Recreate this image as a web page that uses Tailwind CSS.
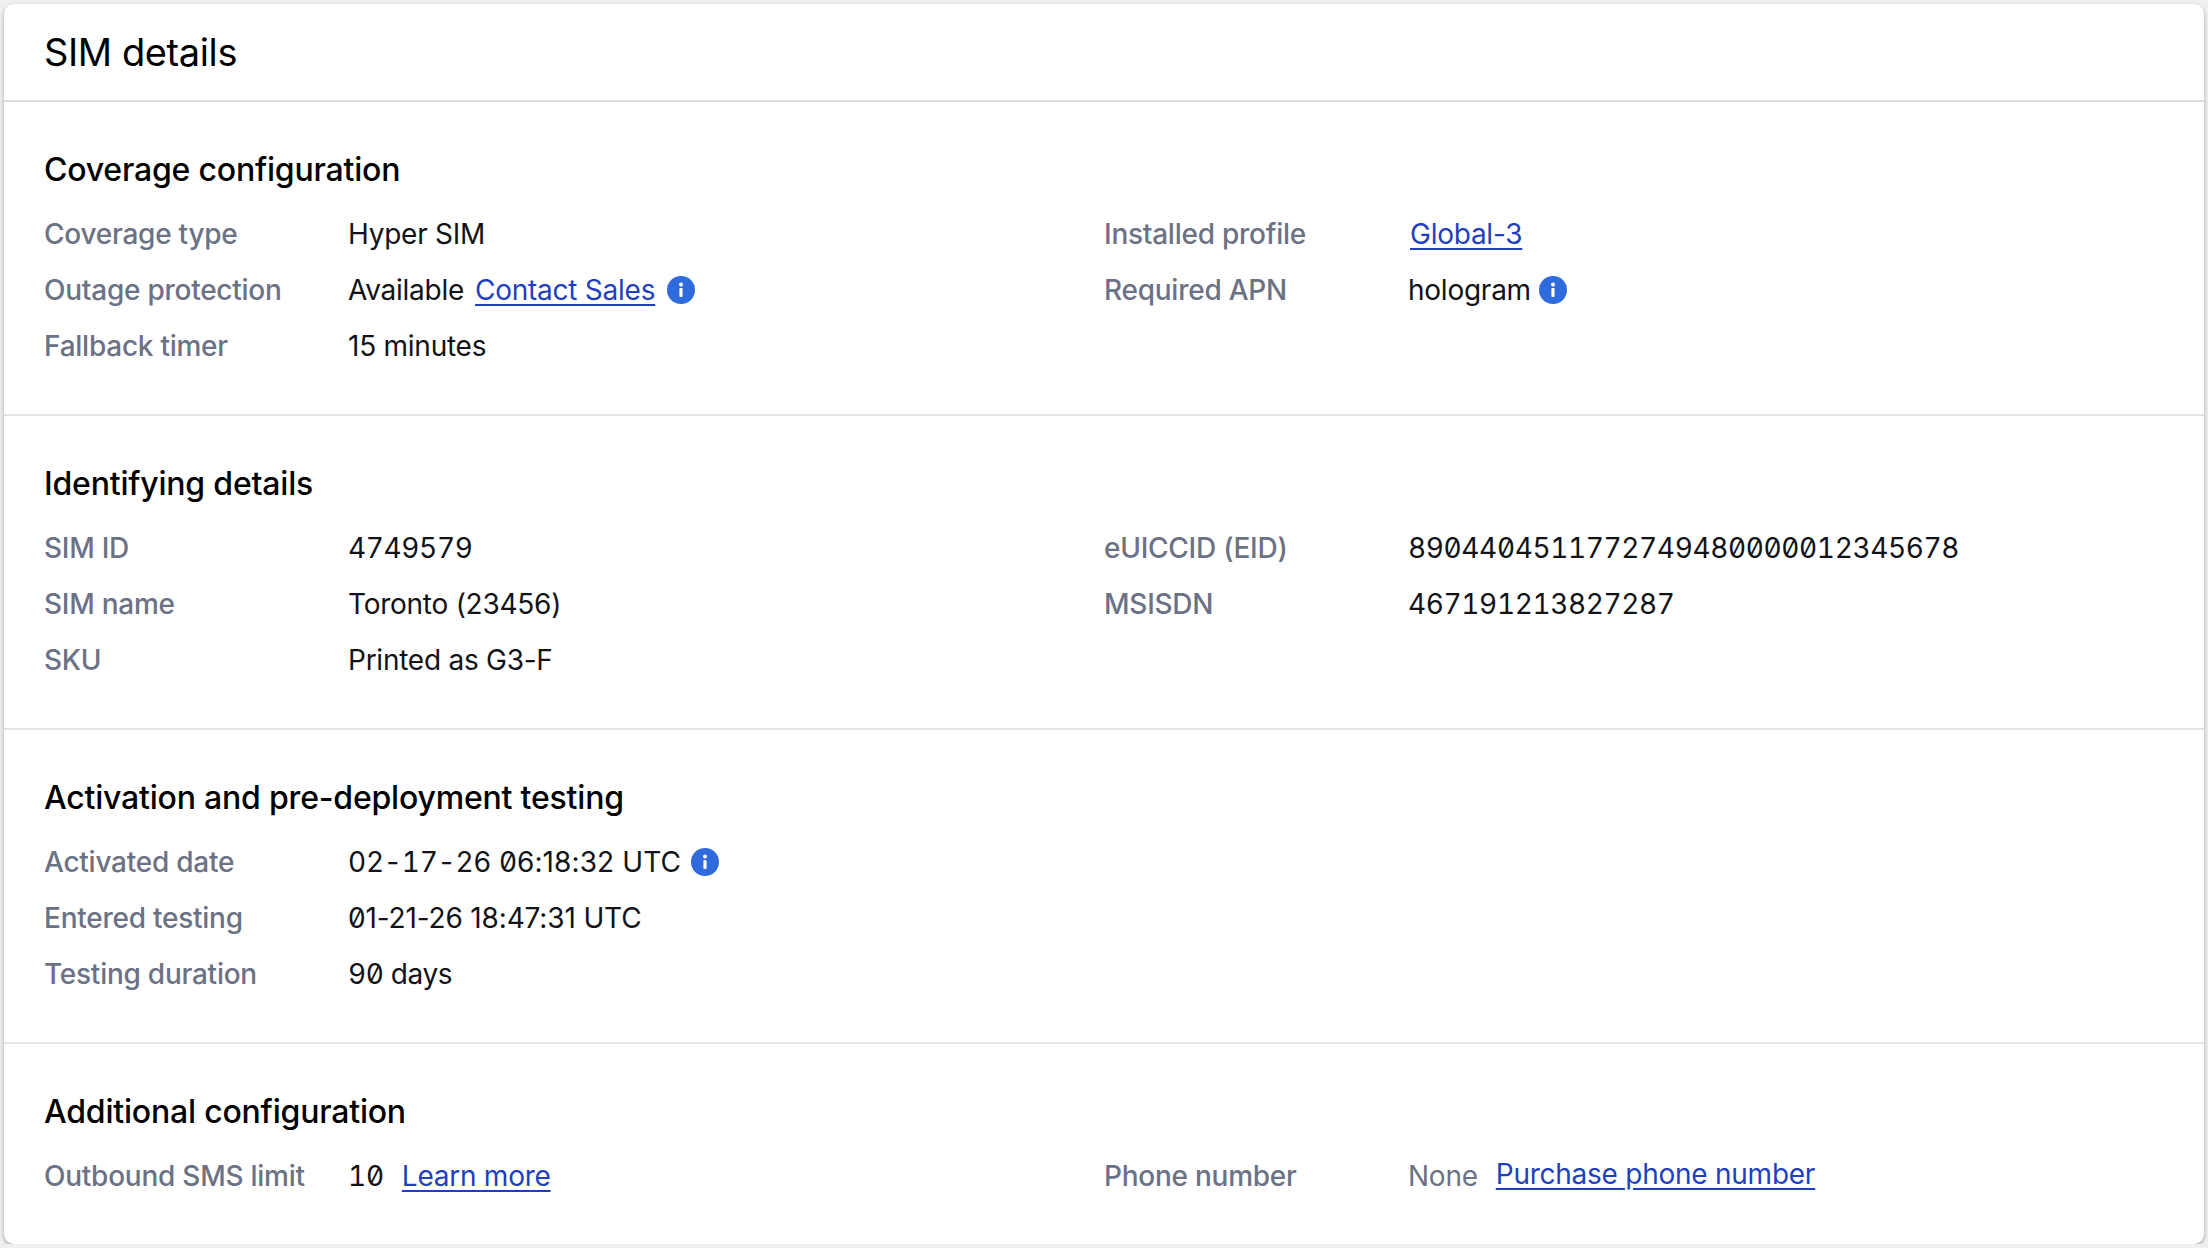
<!DOCTYPE html>
<html>
<head>
    <title>SIM details</title>
    <meta name="viewport" content="width=device-width, initial-scale=1.0">
    <script src="https://cdn.jsdelivr.net/npm/@tailwindcss/browser@4"></script>
</head>
<body class="bg-[#eeeff1] font-['Inter',sans-serif] text-[28px] leading-[40px] tracking-[-0.25px] text-[#111318]">
    <div class="w-[2200px] h-[1240px] mx-auto mt-[4px] bg-white rounded-[10px] shadow-[0_2px_4px_rgba(0,0,0,0.3)] overflow-hidden">
        <div class="h-[98px] border-b-2 border-[#d9dbe1] pl-[40px] flex items-center">
            <h1 class="text-[38px] leading-[44px] font-normal tracking-[-0.4px] text-black">SIM details</h1>
        </div>

        <section class="px-[40px] pt-[48px] pb-[48px] border-b-2 border-[#e3e4e9]">
            <h2 class="text-[32px] leading-[40px] font-medium mb-[24px] tracking-[-0.2px] text-black">Coverage configuration</h2>
            <div class="grid grid-cols-2">
                <div class="space-y-[16px]">
                    <div class="grid grid-cols-[304px_1fr]"><span class="text-[#6b7285] font-medium">Coverage type</span><span>Hyper SIM</span></div>
                    <div class="grid grid-cols-[304px_1fr]"><span class="text-[#6b7285] font-medium">Outage protection</span>
                        <span class="flex items-center gap-[10px]">Available <a href="#" class="text-[#1f3fbf] underline underline-offset-[4px] ml-[1px] mr-[2px]">Contact Sales</a>
                            <svg class="w-[28px] h-[28px]" viewBox="0 0 28 28"><circle cx="14" cy="14" r="14" fill="#2f6bdd"/><circle cx="14" cy="8.5" r="2" fill="#fff"/><rect x="12.4" y="12" width="3.2" height="9" rx="1" fill="#fff"/></svg>
                        </span>
                    </div>
                    <div class="grid grid-cols-[304px_1fr]"><span class="text-[#6b7285] font-medium">Fallback timer</span><span>15 minutes</span></div>
                </div>
                <div class="space-y-[16px]">
                    <div class="grid grid-cols-[304px_1fr]"><span class="text-[#6b7285] font-medium">Installed profile</span><span class="pl-[2px]"><a href="#" class="text-[#1f3fbf] underline underline-offset-[4px]">Global-3</a></span></div>
                    <div class="grid grid-cols-[304px_1fr]"><span class="text-[#6b7285] font-medium">Required APN</span>
                        <span class="flex items-center gap-[8px]">hologram
                            <svg class="w-[28px] h-[28px]" viewBox="0 0 28 28"><circle cx="14" cy="14" r="14" fill="#2f6bdd"/><circle cx="14" cy="8.5" r="2" fill="#fff"/><rect x="12.4" y="12" width="3.2" height="9" rx="1" fill="#fff"/></svg>
                        </span>
                    </div>
                </div>
            </div>
        </section>

        <section class="px-[40px] pt-[48px] pb-[48px] border-b-2 border-[#e3e4e9]">
            <h2 class="text-[32px] leading-[40px] font-medium mb-[24px] tracking-[-0.2px] text-black">Identifying details</h2>
            <div class="grid grid-cols-2">
                <div class="space-y-[16px]">
                    <div class="grid grid-cols-[304px_1fr]"><span class="text-[#6b7285] font-medium">SIM ID</span><span class="tabular-nums slashed-zero tracking-[-0.38px]">4749579</span></div>
                    <div class="grid grid-cols-[304px_1fr]"><span class="text-[#6b7285] font-medium">SIM name</span><span>Toronto (23456)</span></div>
                    <div class="grid grid-cols-[304px_1fr]"><span class="text-[#6b7285] font-medium">SKU</span><span>Printed as G3-F</span></div>
                </div>
                <div class="space-y-[16px]">
                    <div class="grid grid-cols-[304px_1fr]"><span class="text-[#6b7285] font-medium">eUICCID (EID)</span><span class="tabular-nums slashed-zero tracking-[-0.38px]">8904404511772749480000012345678</span></div>
                    <div class="grid grid-cols-[304px_1fr]"><span class="text-[#6b7285] font-medium">MSISDN</span><span class="tabular-nums slashed-zero tracking-[-0.38px]">467191213827287</span></div>
                </div>
            </div>
        </section>

        <section class="px-[40px] pt-[48px] pb-[48px] border-b-2 border-[#e3e4e9]">
            <h2 class="text-[32px] leading-[40px] font-medium mb-[24px] tracking-[-0.2px] text-black">Activation and pre-deployment testing</h2>
            <div class="space-y-[16px]">
                <div class="grid grid-cols-[304px_1fr]"><span class="text-[#6b7285] font-medium">Activated date</span>
                    <span class="flex items-center gap-[10px]"><span class="slashed-zero tracking-[0.1px]"><span class="tabular-nums tracking-[-0.25px]">02-17-26</span> 06:18:32 UTC</span>
                        <svg class="w-[28px] h-[28px]" viewBox="0 0 28 28"><circle cx="14" cy="14" r="14" fill="#2f6bdd"/><circle cx="14" cy="8.5" r="2" fill="#fff"/><rect x="12.4" y="12" width="3.2" height="9" rx="1" fill="#fff"/></svg>
                    </span>
                </div>
                <div class="grid grid-cols-[304px_1fr]"><span class="text-[#6b7285] font-medium">Entered testing</span><span class="slashed-zero tracking-[-0.15px]">01-21-26 18:47:31 UTC</span></div>
                <div class="grid grid-cols-[304px_1fr]"><span class="text-[#6b7285] font-medium">Testing duration</span><span class="slashed-zero tabular-nums tracking-[-0.38px]">90 days</span></div>
            </div>
        </section>

        <section class="px-[40px] pt-[48px]">
            <h2 class="text-[32px] leading-[40px] font-medium mb-[24px] tracking-[-0.2px] text-black">Additional configuration</h2>
            <div class="grid grid-cols-2">
                <div class="grid grid-cols-[304px_1fr]"><span class="text-[#6b7285] font-medium">Outbound SMS limit</span>
                    <span class="flex items-center gap-[18px]"><span class="tabular-nums slashed-zero">10</span><a href="#" class="text-[#1f3fbf] underline underline-offset-[4px]">Learn more</a></span>
                </div>
                <div class="grid grid-cols-[304px_1fr]"><span class="text-[#6b7285] font-medium">Phone number</span>
                    <span class="flex items-center gap-[18px]"><span class="text-[#6b7285]">None</span><a href="#" class="text-[#1f3fbf] underline underline-offset-[4px] -mt-[5px]">Purchase phone number</a></span>
                </div>
            </div>
        </section>
    </div>
</body>
</html>
